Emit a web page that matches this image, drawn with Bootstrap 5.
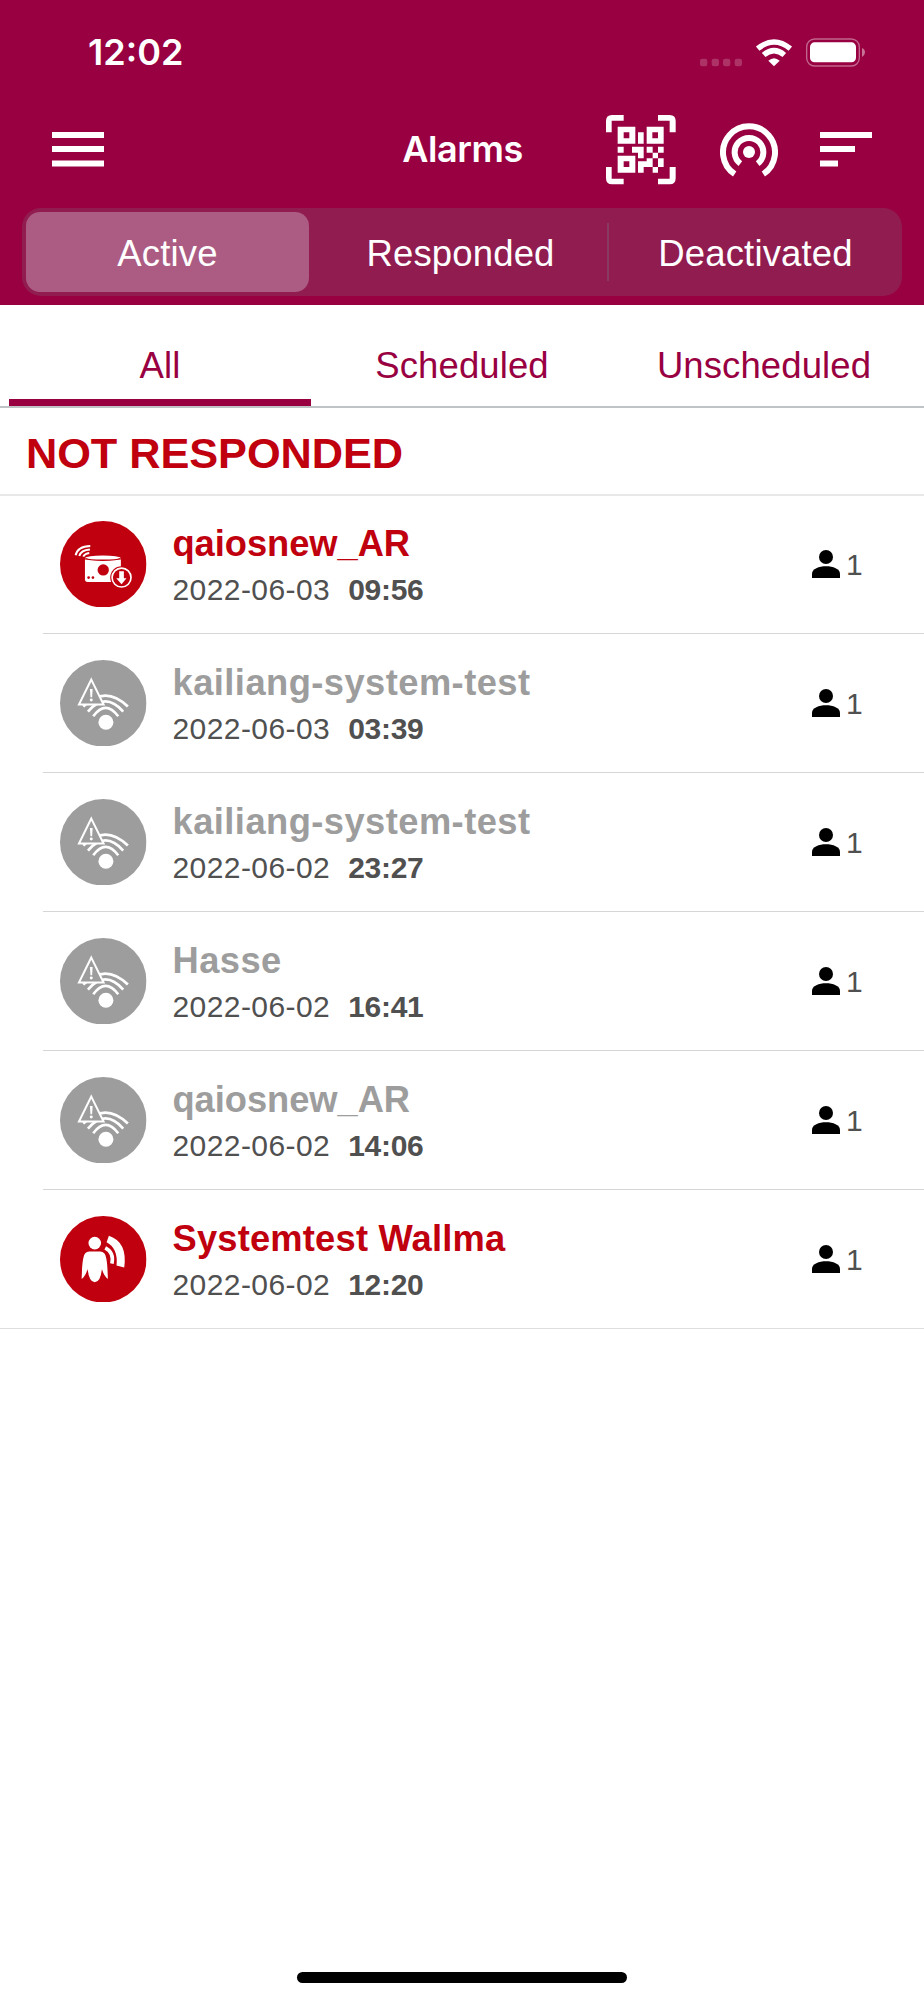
<!DOCTYPE html>
<html lang="en">
<head>
<meta charset="utf-8">
<meta name="viewport" content="width=device-width, initial-scale=1">
<title>Alarms</title>
<link href="https://cdn.jsdelivr.net/npm/bootstrap@5.3.0/dist/css/bootstrap.min.css" rel="stylesheet">
<style>
  body { font-family: "Liberation Sans", Arial, sans-serif; background: #fff; color: #505050; height: 2000px; }
  svg { display: block; flex: none; }
  .app-head { background: #990041; height: 304.5px; color: #fff; }
  .status { height: 106px; padding: 0 59px 0 88px; font: 600 36px/105px Inter, sans-serif; }
  .toolbar { height: 101.5px; padding: 0 52px; display: grid; grid-template-columns: 1fr auto 1fr; }
  .toolbar h1 { font: 600 36px/44px Inter, sans-serif; margin: 0; letter-spacing: -.4px; padding: 21px 0 0 1px; }
  .toolbar .btn { padding: 0; border: 0; line-height: 1; }
  .seg { margin: 0 22px; height: 88.5px; padding: 4.5px 4px; border-radius: 19px; background: #901c50; }
  .seg .nav-link { padding: 2px 0 0; height: 79.5px; border-radius: 14px; color: #fff; font-size: 36.5px; line-height: 79px; text-align: center; letter-spacing: .15px; }
  .seg .nav-link.active { background: #ac5b83; color: #fff; }
  .seg .s1 { width: 283px; }
  .seg .s2 { width: 298px; padding-left: 5px; }
  .seg .s3 { padding-left: 4px; }
  .seg .rule { width: 2px; height: 58px; background: #883a61; }
  .tabs { height: 103.5px; padding: 0 9px; border-bottom: 2px solid #c0c3c6; }
  .tabs .nav-link { padding: 12px 0 0; height: 101.5px; color: #990041; font-size: 36.5px; line-height: 98px; text-align: center; border-radius: 0; letter-spacing: .1px; }
  .tabs .nav-link.active { box-shadow: inset 0 -7px #990041; }
  .section-title { height: 88px; margin: 0; padding-left: 26px; font-size: 43.3px; line-height: 90px; font-weight: 700; color: #c0000e; letter-spacing: -.05px; border-bottom: 2px solid #e8e8e8; }
  .alarms { margin-top: -1px; border-radius: 0; }
  .alarm { height: 139px; padding: 0 63px 0 17px; margin-left: 43px; border-bottom: 1px solid #d6d6d6; }
  .alarm.final { margin-left: 0; padding-left: 60px; border-color: #dedede; }
  .alarm .info { margin-left: 26px; padding-top: 3px; }
  .alarm .who { font-size: 36.3px; line-height: 42px; font-weight: 700; color: #9d9d9d; letter-spacing: -.05px; }
  .alarm.hot .who { color: #c0000e; }
  .alarm .wide { letter-spacing: .45px; }
  .alarm .mid { letter-spacing: .2px; }
  .alarm .when { font-size: 30px; line-height: 36px; margin-top: 7px; }
  .alarm .day { letter-spacing: .42px; margin-right: 18px; }
  .alarm .when b { letter-spacing: -.3px; }
  .alarm .person { margin-right: 6px; }
  .alarm .count { font-size: 30px; line-height: 36px; width: 15px; padding-top: 1px; }
  .home { width: 330.5px; height: 11px; border-radius: 6px; background: #000; margin-bottom: 17.5px; }
</style>
</head>
<body class="d-flex flex-column">

<svg width="0" height="0" class="position-absolute" aria-hidden="true">
  <symbol id="device" viewBox="0 0 260 260">
    <circle cx="130" cy="130" r="130" fill="#c0000e"/>
    <g fill="none" stroke="#fff" stroke-width="6">
      <path d="M47 103Q53 76 91 75"/><path d="M58 105Q63 88 90 86"/><path d="M70 107Q74 98 88 96"/>
    </g>
    <path fill="#fff" d="M75 116H183V183H83Q75 183 75 175Z"/>
    <ellipse cx="129" cy="111" rx="53" ry="7.500" fill="#fff"/>
    <path d="M78 113Q84 118 129 118T180 113" fill="none" stroke="#c0000e" stroke-width="4"/>
    <circle cx="130" cy="147" r="17" fill="#c0000e"/>
    <circle cx="86" cy="170" r="4" fill="#c0000e"/><circle cx="99" cy="170" r="4" fill="#c0000e"/>
    <circle cx="185" cy="170" r="34" fill="#c0000e"/>
    <circle cx="185" cy="170" r="28.500" fill="none" stroke="#fff" stroke-width="5"/>
    <path fill="#fff" d="M178 151H192V172H200L185 190L169 172H178Z"/>
  </symbol>
  <symbol id="signal" viewBox="0 0 260 260">
    <circle cx="130" cy="130" r="130" fill="#9d9d9d"/>
    <g fill="none" stroke="#fff" stroke-width="8">
      <path d="M70 140Q136 74 204 140"/><path d="M84 155Q136 94 190 155"/><path d="M100 169Q137 119 175 169"/>
    </g>
    <circle cx="138" cy="187" r="22.500" fill="#fff"/>
    <path d="M94 59L131 134H57Z" fill="#9d9d9d" stroke="#fff" stroke-width="6"/>
    <path d="M90 87H98L96.500 112H91.500Z" fill="#fff"/><circle cx="94" cy="120" r="4.500" fill="#fff"/>
  </symbol>
  <symbol id="person-alarm" viewBox="0 0 260 260">
    <circle cx="130" cy="130" r="130" fill="#c0000e"/>
    <circle cx="104.500" cy="81.500" r="19" fill="#fff"/>
    <path fill="#fff" d="M65 189C66 168 66 146 70 127Q73 107 88 107H121Q136 107 139 127C143 146 143 168 144 189Q132 181 126 159Q122 199 104.500 199Q87 199 83 159Q77 181 65 189Z"/>
    <path d="M136 96Q163 110 156 143" fill="none" stroke="#fff" stroke-width="11"/>
    <path fill="#fff" d="M147 59Q204 78 193 155L170 149Q175 97 140 79Z"/>
  </symbol>
  <symbol id="person" viewBox="0 0 28 28">
    <circle cx="14" cy="7" r="7"/><path d="M0 28V24C0 13.800 28 13.800 28 24V28Z"/>
  </symbol>
</svg>

<header class="app-head flex-shrink-0">
  <div class="status d-flex justify-content-between">
    <span>12:02</span>
    <svg width="165" height="30" viewBox="714 113 495 90" fill="#fff" style="margin-top:37.500px">
      <g opacity=".2"><rect x="714" y="175" width="22" height="23" rx="7"/><rect x="749" y="175" width="22" height="23" rx="7"/><rect x="783" y="175" width="22" height="23" rx="7"/><rect x="818" y="175" width="22" height="23" rx="7"/></g>
      <g fill="none" stroke="#fff" stroke-width="16.500"><path d="M887 145Q936 105 985 145"/><path d="M905 164Q936 138 967 164"/></g>
      <path d="M919 181Q936 166 953 181L936 198Z"/>
      <rect x="1034" y="116" width="158" height="81" rx="24" fill="none" stroke="#fff" stroke-opacity=".4" stroke-width="4"/>
      <rect x="1044" y="126" width="138" height="60" rx="14"/>
      <path d="M1200 143Q1209 147 1209 156T1200 170Z" opacity=".45"/>
    </svg>
  </div>
  <div class="toolbar">
    <button class="btn align-self-start text-start" aria-label="Menu" style="margin-top:26px">
      <svg width="52" height="35" viewBox="0 0 52 35" fill="#fff"><path d="M0 0H52V6H0ZM0 14H52V20H0ZM0 28.500H52V34.500H0Z"/></svg>
    </button>
    <h1>Alarms</h1>
    <div class="d-flex justify-content-end">
      <button class="btn align-self-start" aria-label="Scan code" style="margin:8.500px 44px 0 0">
        <svg width="70" height="70" viewBox="433 343 210 210" fill="#fff" fill-rule="evenodd">
          <path d="M433 395V361Q433 343 451 343H486V360H450V395ZM589 343H624Q642 343 642 361V395H624V360H589ZM433 499H450V534H486V551H451Q433 551 433 533ZM624 499H642V533Q642 551 624 551H589V534H624Z"/>
          <path d="M468 378H521V429H468ZM486 395V413H503V395ZM555 378H606V429H555ZM572 395V413H589V395ZM468 465H521V516H468ZM486 482V499H503V482Z"/>
          <path d="M529 395H546V429H529ZM468 438H486V456H468ZM511 438H546V473H529V456H511ZM555 438H573V456H555ZM589 438H606V456H589ZM573 456H589V473H573ZM555 473H573V499H546V516H529V482H555ZM589 473H606V499H589ZM573 499H589V516H573Z"/>
        </svg>
      </button>
      <button class="btn align-self-start" aria-label="Nearby" style="margin:17px 42px 0 0">
        <svg width="58" height="58" viewBox="-87 -87 174 174" fill="none" stroke="#fff" stroke-width="18">
          <path d="M-43 66A78 78 0 1 1 43 66"/><path d="M-26 35A43 43 0 1 1 26 35"/><circle r="18" fill="#fff" stroke="none"/>
        </svg>
      </button>
      <button class="btn align-self-start" aria-label="Sort" style="margin-top:26px">
        <svg width="52" height="35" viewBox="0 0 52 35" fill="#fff"><path d="M0 0H52V6H0ZM0 14H35V20H0ZM0 28.500H18V34.500H0Z"/></svg>
      </button>
    </div>
  </div>
  <nav class="seg nav nav-pills flex-nowrap align-items-center">
    <a class="nav-link active s1">Active</a>
    <a class="nav-link s2">Responded</a>
    <span class="rule"></span>
    <a class="nav-link flex-fill s3">Deactivated</a>
  </nav>
</header>

<nav class="tabs nav nav-fill flex-nowrap flex-shrink-0">
  <a class="nav-link col-4 active">All</a>
  <a class="nav-link col-4">Scheduled</a>
  <a class="nav-link col-4">Unscheduled</a>
</nav>

<main>
  <h2 class="section-title">NOT RESPONDED</h2>
  <ul class="alarms list-unstyled mb-0">
    <li class="alarm hot d-flex align-items-center">
      <svg width="86.500" height="86.500"><use href="#device"/></svg>
      <div class="info flex-fill"><div class="who">qaiosnew_AR</div><div class="when"><span class="day">2022-06-03</span><b>09:56</b></div></div>
      <svg width="28" height="28" class="person"><use href="#person"/></svg><span class="count">1</span>
    </li>
    <li class="alarm d-flex align-items-center">
      <svg width="86.500" height="86.500"><use href="#signal"/></svg>
      <div class="info flex-fill"><div class="who wide">kailiang-system-test</div><div class="when"><span class="day">2022-06-03</span><b>03:39</b></div></div>
      <svg width="28" height="28" class="person"><use href="#person"/></svg><span class="count">1</span>
    </li>
    <li class="alarm d-flex align-items-center">
      <svg width="86.500" height="86.500"><use href="#signal"/></svg>
      <div class="info flex-fill"><div class="who wide">kailiang-system-test</div><div class="when"><span class="day">2022-06-02</span><b>23:27</b></div></div>
      <svg width="28" height="28" class="person"><use href="#person"/></svg><span class="count">1</span>
    </li>
    <li class="alarm d-flex align-items-center">
      <svg width="86.500" height="86.500"><use href="#signal"/></svg>
      <div class="info flex-fill"><div class="who wide">Hasse</div><div class="when"><span class="day">2022-06-02</span><b>16:41</b></div></div>
      <svg width="28" height="28" class="person"><use href="#person"/></svg><span class="count">1</span>
    </li>
    <li class="alarm d-flex align-items-center">
      <svg width="86.500" height="86.500"><use href="#signal"/></svg>
      <div class="info flex-fill"><div class="who">qaiosnew_AR</div><div class="when"><span class="day">2022-06-02</span><b>14:06</b></div></div>
      <svg width="28" height="28" class="person"><use href="#person"/></svg><span class="count">1</span>
    </li>
    <li class="alarm final hot d-flex align-items-center">
      <svg width="86.500" height="86.500"><use href="#person-alarm"/></svg>
      <div class="info flex-fill"><div class="who mid">Systemtest Wallma</div><div class="when"><span class="day">2022-06-02</span><b>12:20</b></div></div>
      <svg width="28" height="28" class="person"><use href="#person"/></svg><span class="count">1</span>
    </li>
  </ul>
</main>

<div class="home mt-auto mx-auto flex-shrink-0"></div>

<script src="https://cdn.jsdelivr.net/npm/bootstrap@5.3.0/dist/js/bootstrap.bundle.min.js"></script>
</body>
</html>
